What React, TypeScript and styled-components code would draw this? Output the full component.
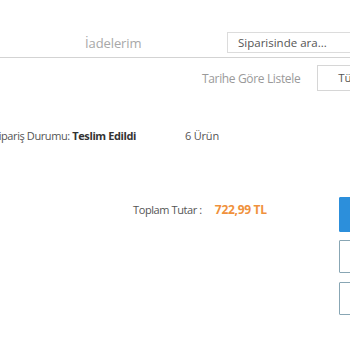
import React from 'react';
import styled, { createGlobalStyle } from 'styled-components';

const GlobalStyle = createGlobalStyle`
  html, body {
    margin: 0;
    padding: 0;
    background: #ffffff;
    overflow: hidden;
  }
  body {
    font-family: 'Open Sans', 'Noto Sans', Arial, sans-serif;
  }
`;

const Page = styled.div`
  width: 480px;
  background: #ffffff;
`;

const Header = styled.div`
  display: flex;
  align-items: center;
  box-sizing: border-box;
  height: 58px;
  padding: 32px 0 4px;
  border-bottom: 1px solid #d3d3d3;
`;

const Tab = styled.div`
  flex-shrink: 0;
  margin-left: 85px;
  width: 142px;
  font-size: 13px;
  color: #a8a8a8;
  line-height: 20px;
  letter-spacing: -0.1px;
`;

const SearchInput = styled.input`
  flex-shrink: 0;
  box-sizing: border-box;
  width: 160px;
  height: 21px;
  border: 1px solid #dcdcdc;
  padding: 0 10px;
  font-family: inherit;
  font-size: 11.5px;
  color: #555;
  outline: none;

  &::placeholder {
    color: #555;
  }
`;

const FilterRow = styled.div`
  display: flex;
  align-items: center;
  margin-top: 7px;
  padding-left: 202px;
  gap: 17px;
`;

const FilterLabel = styled.span`
  flex-shrink: 0;
  font-size: 12px;
  letter-spacing: -0.35px;
  color: #9a9a9a;
`;

const Select = styled.div`
  flex-shrink: 0;
  box-sizing: border-box;
  width: 90px;
  height: 26px;
  border: 1px solid #d6d6d6;
  padding-left: 20px;
  font-size: 11.5px;
  line-height: 24px;
  color: #555;
`;

const OrderRow = styled.div`
  display: flex;
  align-items: center;
  margin-top: 37px;
  margin-left: -7px;
  font-size: 11px;
  line-height: 16px;
  color: #555;
`;

const Status = styled.span`
  flex-shrink: 0;
  width: 192px;
  letter-spacing: -0.4px;

  b {
    color: #333;
    font-weight: 700;
  }
`;

const Count = styled.span`
  color: #555;
  letter-spacing: -0.2px;
`;

const TotalRow = styled.div`
  display: flex;
  align-items: flex-start;
  margin-top: 53px;
`;

const Total = styled.div`
  flex-shrink: 0;
  display: flex;
  align-items: baseline;
  width: 206px;
  margin-left: 133px;
  margin-top: 4px;
  gap: 13px;
  font-size: 11px;
  letter-spacing: -0.4px;
  color: #555;
`;

const Amount = styled.span`
  font-size: 12px;
  font-weight: 700;
  letter-spacing: -0.3px;
  color: #f0913c;
`;

const Buttons = styled.div`
  flex-shrink: 0;
  display: flex;
  flex-direction: column;
  gap: 9px;
`;

const Button = styled.div<{ $primary?: boolean }>`
  box-sizing: border-box;
  width: 90px;
  height: ${(p) => (p.$primary ? '35px' : '33px')};
  margin-bottom: ${(p) => (p.$primary ? '-1px' : '0')};
  background: ${(p) => (p.$primary ? '#2c8fdb' : '#ffffff')};
  border: 1px solid ${(p) => (p.$primary ? '#2c8fdb' : '#88a6b4')};
  border-radius: 1px;
`;

const App = () => {
  return (
    <Page>
      <GlobalStyle />
      <Header>
        <Tab>İadelerim</Tab>
        <SearchInput placeholder="Siparisinde ara..." />
      </Header>
      <FilterRow>
        <FilterLabel>Tarihe Göre Listele</FilterLabel>
        <Select>Tümü</Select>
      </FilterRow>
      <OrderRow>
        <Status>
          Sipariş Durumu: <b>Teslim Edildi</b>
        </Status>
        <Count>6 Ürün</Count>
      </OrderRow>
      <TotalRow>
        <Total>
          <span>Toplam Tutar :</span>
          <Amount>722,99 TL</Amount>
        </Total>
        <Buttons>
          <Button $primary />
          <Button />
          <Button />
        </Buttons>
      </TotalRow>
    </Page>
  );
};

export default App;
